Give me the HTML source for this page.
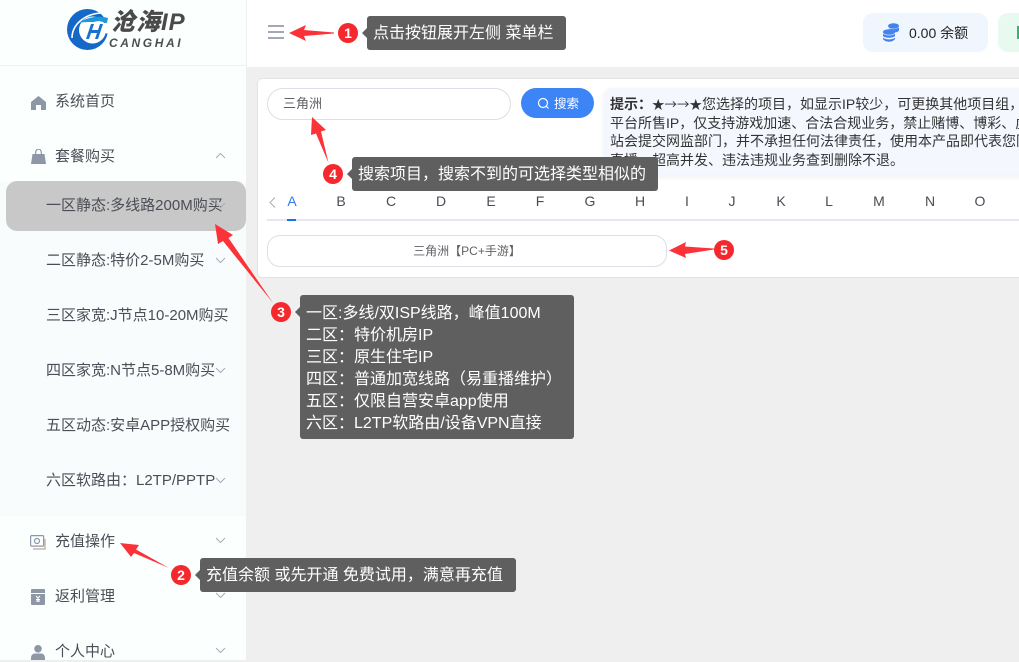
<!DOCTYPE html>
<html lang="zh"><head><meta charset="utf-8"><title>沧海IP</title>
<style>
*{box-sizing:border-box}
html,body{margin:0;padding:0}
body{width:1019px;height:660px;overflow:hidden;position:relative;background:#efefef;font-family:"Liberation Sans","Noto Sans CJK SC",sans-serif;font-size:14px;color:#4a4d55}
.a{position:absolute;white-space:nowrap}
#side{left:0;top:0;width:246px;height:660px;background:#fbfffe}
#head{left:247px;top:0;width:772px;height:67px;background:#fff}
.m{position:absolute;white-space:nowrap;line-height:20px;font-size:15px;color:#4b4e56}
.tip{position:absolute;background:#5f5f5f;color:#fff;border-radius:3px;font-size:16px;line-height:22px;padding:0 6px;white-space:nowrap}
.tip:before{content:"";position:absolute;left:-5px;top:12px;border:5px solid transparent;border-left:0;border-right-color:#5f5f5f}
.n{position:absolute;width:20px;height:20px;border-radius:50%;background:#f5282d;color:#fff;font-size:14px;line-height:20px;text-align:center;font-weight:bold}
.l{position:absolute;top:193px;font-size:14px;line-height:16px;color:#4a4d55;transform:translateX(-50%)}
</style></head><body>
<div id="side" class="a"></div>
<div class="a" style="left:0;top:65px;width:246px;height:1px;background:#eef1f2"></div>
<div class="a" style="left:246px;top:0;width:1px;height:67px;background:#eef1f2"></div>
<div id="head" class="a"></div>
<div class="a" style="left:0;top:181px;width:246px;height:335px;background:#f9fcfc"></div>
<!-- logo -->
<svg class="a" style="left:66px;top:8px" width="44" height="44" viewBox="0 0 44 44">
<circle cx="21.500" cy="21.500" r="20.500" fill="#1668c8"/>
<circle cx="26.500" cy="22" r="13.500" fill="#fff"/>
<path d="M38 15l6-1v12l-6-1z" fill="#fff"/>
<path d="M13 15C20 10 30 7 42 10l-1 5-8-2-6 1c-5 0-9 0-14 1z" fill="#1b9ad8"/>
<path d="M6 30C6 17 18 6 35 5" fill="none" stroke="#fff" stroke-width="1.600"/>
<path d="M20 31l5-15h3l-2 6h6l2-6h3l-5 15h-3l2-6h-6l-2 6z" fill="#1b72cc"/>
</svg>
<div class="a" style="left:111px;top:8px;font-size:24px;line-height:30px;font-weight:900;font-style:italic;color:#4a4a4a;letter-spacing:1px">沧海IP</div>
<div class="a" style="left:109px;top:36px;font-size:12px;line-height:14px;font-weight:bold;font-style:italic;color:#4f4f4f;letter-spacing:2.600px">CANGHAI</div>
<!-- sidebar -->
<svg class="a" style="left:31px;top:96px" width="15" height="14" viewBox="0 0 15 14"><path d="M7.500 0L15 6v8h-5V9H5v5H0V6z" fill="#8e97a5"/></svg>
<div class="m" style="left:55px;top:92px">系统首页</div>
<svg class="a" style="left:31px;top:149px" width="15" height="15" viewBox="0 0 15 15"><path d="M1.500 5h12L15 15H0z" fill="#8e97a5"/><path d="M4.700 6V3a2.800 2.800 0 015.600 0v3" fill="none" stroke="#8e97a5" stroke-width="1.200"/></svg>
<div class="m" style="left:55px;top:147px">套餐购买</div>
<svg class="a" style="left:215px;top:152px" width="11" height="7" viewBox="0 0 11 7"><path d="M1 6l4.500-4.500L10 6" fill="none" stroke="#a6adb8"/></svg>
<div class="a" style="left:6px;top:181px;width:240px;height:50px;background:#c8c8c8;border-radius:11px"></div>
<div class="m" style="left:46px;top:196px">一区静态:多线路200M购买</div>
<div class="m" style="left:46px;top:251px">二区静态:特价2-5M购买</div>
<div class="m" style="left:46px;top:306px">三区家宽:J节点10-20M购买</div>
<div class="m" style="left:46px;top:361px">四区家宽:N节点5-8M购买</div>
<div class="m" style="left:46px;top:416px">五区动态:安卓APP授权购买</div>
<div class="m" style="left:46px;top:471px">六区软路由：L2TP/PPTP</div>
<svg class="a" style="left:215px;top:202px" width="11" height="7" viewBox="0 0 11 7"><path d="M1 1l4.500 4.500L10 1" fill="none" stroke="#a6adb8"/></svg>
<svg class="a" style="left:215px;top:257px" width="11" height="7" viewBox="0 0 11 7"><path d="M1 1l4.500 4.500L10 1" fill="none" stroke="#a6adb8"/></svg>
<svg class="a" style="left:215px;top:367px" width="11" height="7" viewBox="0 0 11 7"><path d="M1 1l4.500 4.500L10 1" fill="none" stroke="#a6adb8"/></svg>
<svg class="a" style="left:215px;top:477px" width="11" height="7" viewBox="0 0 11 7"><path d="M1 1l4.500 4.500L10 1" fill="none" stroke="#a6adb8"/></svg>
<svg class="a" style="left:30px;top:535px" width="16" height="15" viewBox="0 0 16 15"><rect x=".6" y=".6" width="13" height="10.500" rx="1" fill="none" stroke="#8e97a5" stroke-width="1.200"/><circle cx="7" cy="6" r="2.500" fill="none" stroke="#8e97a5" stroke-width="1.200"/><path d="M15 4v10H3" fill="none" stroke="#b9a995" stroke-width="1.200"/></svg>
<div class="m" style="left:55px;top:532px">充值操作</div>
<svg class="a" style="left:215px;top:537px" width="11" height="7" viewBox="0 0 11 7"><path d="M1 1l4.500 4.500L10 1" fill="none" stroke="#a6adb8"/></svg>
<svg class="a" style="left:31px;top:589px" width="14" height="16" viewBox="0 0 14 16"><path d="M0 1a1 1 0 011-1h12a1 1 0 011 1v3H0z" fill="#8e97a5"/><path d="M0 5h14v10a1 1 0 01-1 1H1a1 1 0 01-1-1z" fill="#8e97a5"/><path d="M5 7l2 2 2-2M7 9v4M5 10.500h4M5 12h4" stroke="#fff" fill="none"/></svg>
<div class="m" style="left:55px;top:587px">返利管理</div>
<svg class="a" style="left:215px;top:592px" width="11" height="7" viewBox="0 0 11 7"><path d="M1 1l4.500 4.500L10 1" fill="none" stroke="#a6adb8"/></svg>
<svg class="a" style="left:31px;top:645px" width="14" height="15" viewBox="0 0 14 15"><circle cx="7" cy="3.800" r="3.800" fill="#8e97a5"/><path d="M0 15v-2c0-3 2-4.500 4-4.500h6c2 0 4 1.500 4 4.500v2z" fill="#8e97a5"/></svg>
<div class="m" style="left:55px;top:642px">个人中心</div>
<svg class="a" style="left:215px;top:647px" width="11" height="7" viewBox="0 0 11 7"><path d="M1 1l4.500 4.500L10 1" fill="none" stroke="#a6adb8"/></svg>
<!-- header -->
<svg class="a" style="left:268px;top:25px" width="16" height="14" viewBox="0 0 16 14"><path d="M0 0h16v2H0zM0 6h16v2H0zM0 12h16v2H0z" fill="#a3a8b5"/></svg>
<div class="a" style="left:863px;top:13px;width:125px;height:39px;background:#f0f6fe;border-radius:10px"></div>
<svg class="a" style="left:883px;top:23px" width="16" height="19" viewBox="0 0 16 19"><ellipse cx="10.500" cy="3" rx="5.500" ry="2.800" fill="#4383ee"/><path d="M5 5c2 1.500 8 1.800 11-.5v3c-1 1.500-3 2-5 2z" fill="#4383ee"/><ellipse cx="6" cy="9" rx="6" ry="2.800" fill="#4383ee"/><path d="M0 10.500c2 2.500 10 2.500 12 0v2.500c-2 2.300-10 2.300-12 0zM0 14.500c2 2.500 10 2.500 12 0V16c-2 3.600-10 3.600-12 0z" fill="#4383ee"/></svg>
<div class="a" style="left:909px;top:23px;font-size:14px;line-height:20px;color:#222">0.00 余额</div>
<div class="a" style="left:998px;top:13px;width:40px;height:39px;background:#e8f9f0;border-radius:10px"></div>
<div class="a" style="left:1017px;top:26px;width:2px;height:13px;background:#2fb86e"></div>
<!-- card -->
<div class="a" style="left:257px;top:78px;width:770px;height:200px;background:#fff;border:1px solid #e2e3e6;border-radius:5px"></div>
<div class="a" style="left:267px;top:88px;width:244px;height:32px;border:1px solid #dcdfe6;border-radius:16px;background:#fff"></div>
<div class="a" style="left:283px;top:94px;font-size:13px;line-height:20px;color:#606266">三角洲</div>
<div class="a" style="left:521px;top:88px;width:73px;height:30px;background:#3d85f7;border-radius:15px"></div>
<svg class="a" style="left:537px;top:97px" width="13" height="13" viewBox="0 0 13 13"><circle cx="6" cy="6" r="4.500" fill="none" stroke="#fff" stroke-width="1.200"/><path d="M9.500 9.500l2 2" stroke="#fff" stroke-width="1.200"/></svg>
<div class="a" style="left:554px;top:95px;font-size:12.500px;line-height:18px;color:#fff">搜索</div>
<div class="a" style="left:604px;top:88px;width:430px;height:87px;background:#f4f7fe;border-radius:8px;box-shadow:0 2px 6px rgba(0,0,0,.06)"></div>
<div class="a" style="left:610px;top:95px;font-size:14px;line-height:18.700px;color:#333;width:409px;overflow:hidden"><b>提示：</b><span style="font-family:'Noto Sans CJK SC',sans-serif;font-size:12.500px">★→→★</span>您选择的项目，如显示IP较少，可更换其他项目组，<br>平台所售IP，仅支持游戏加速、合法合规业务，禁止赌博、博彩、虚<br>站会提交网监部门，并不承担任何法律责任，使用本产品即代表您同<br>直播、超高并发、违法违规业务查到删除不退。</div>
<!-- letters -->
<svg class="a" style="left:269px;top:197px" width="7" height="11" viewBox="0 0 7 11"><path d="M6 .5L1 5.500l5 5" fill="none" stroke="#a6adb8"/></svg>
<div class="l" style="left:292px;color:#2d7cf0">A</div>
<div class="l" style="left:341px">B</div>
<div class="l" style="left:391px">C</div>
<div class="l" style="left:441px">D</div>
<div class="l" style="left:491px">E</div>
<div class="l" style="left:540px">F</div>
<div class="l" style="left:590px">G</div>
<div class="l" style="left:640px">H</div>
<div class="l" style="left:687px">I</div>
<div class="l" style="left:732px">J</div>
<div class="l" style="left:781px">K</div>
<div class="l" style="left:829px">L</div>
<div class="l" style="left:879px">M</div>
<div class="l" style="left:930px">N</div>
<div class="l" style="left:980px">O</div>
<div class="a" style="left:267px;top:219px;width:752px;height:2px;background:#e4e7ed"></div>
<div class="a" style="left:287px;top:219px;width:9px;height:2px;background:#1a73e8"></div>
<div class="a" style="left:267px;top:235px;width:400px;height:32px;border:1px solid #dcdfe6;border-radius:13px;background:#fff;text-align:center;font-size:12px;line-height:30px;color:#606266">三角洲【PC+手游】</div>
<!-- arrows -->
<svg class="a" style="left:0;top:0" width="1019" height="660" viewBox="0 0 1019 660">
<g fill="#fb3338">
<polygon points="289,33 306,25 304,30 334,32.500 334,33.500 304,36 306,41"/>
<polygon points="120,543 139,545 136,549.500 169,568 134,553 131,557"/>
<polygon points="215,224 233,235 228.500,238 273,303 223,241 218,244"/>
<polygon points="312,117 326,130 321,131.500 328.500,163 316,133.500 311,135"/>
<polygon points="669,250.500 686,242 685,246.500 714,248.500 714,249.500 685,254 686,258"/>
</g></svg>
<div class="n" style="left:338px;top:23px">1</div>
<div class="tip" style="left:367px;top:16px;width:199px;height:34px;line-height:36px">点击按钮展开左侧 菜单栏</div>
<div class="n" style="left:171px;top:565px">2</div>
<div class="tip" style="left:200px;top:558px;width:316px;height:34px;line-height:36px">充值余额 或先开通 免费试用，满意再充值</div>
<div class="n" style="left:271px;top:302px">3</div>
<div class="tip" style="left:300px;top:295px;width:274px;height:144px;padding-top:8px">一区:多线/双ISP线路，峰值100M<br>二区：特价机房IP<br>三区：原生住宅IP<br>四区：普通加宽线路（易重播维护）<br>五区：仅限自营安卓app使用<br>六区：L2TP软路由/设备VPN直接</div>
<div class="n" style="left:323px;top:164px">4</div>
<div class="tip" style="left:352px;top:157px;width:306px;height:34px;line-height:36px">搜索项目，搜索不到的可选择类型相似的</div>
<div class="n" style="left:714px;top:240px">5</div>
</body></html>
